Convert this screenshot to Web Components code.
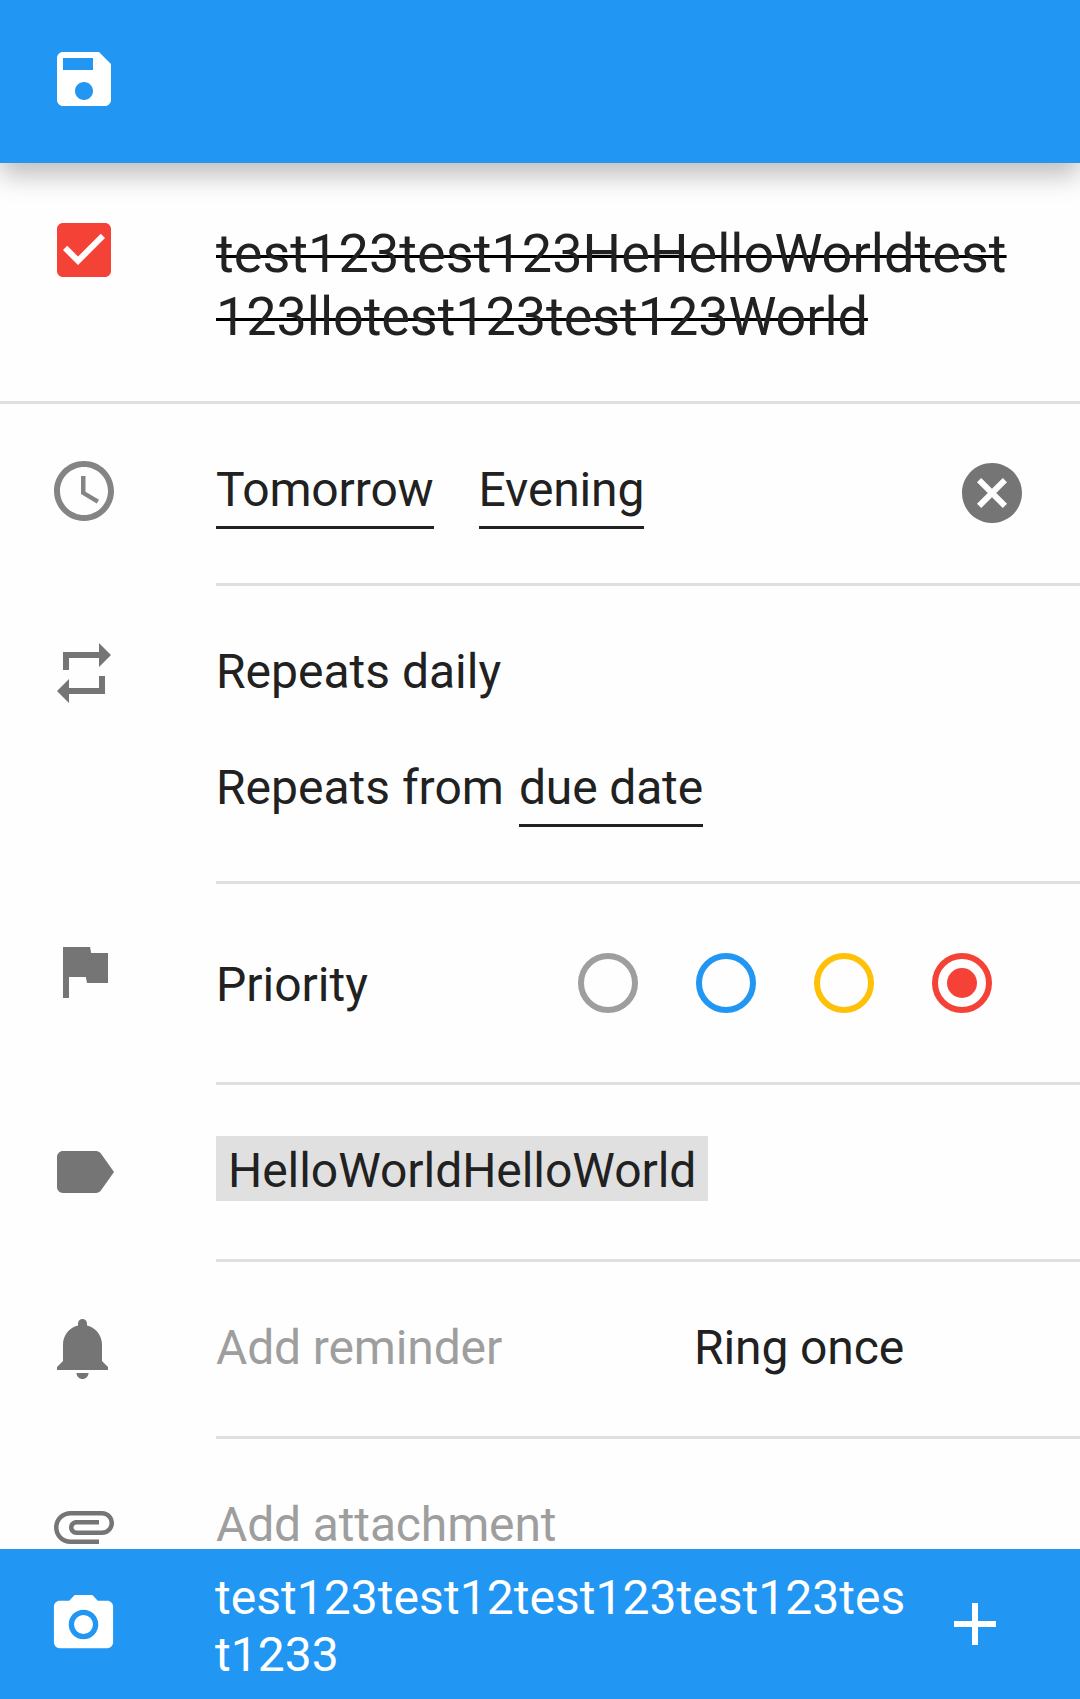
<!DOCTYPE html>
<html lang="en">
<head>
<meta charset="utf-8">
<title>Edit task</title>
<style>
  html, body { margin: 0; height: 100%; overflow: hidden; }
  body { background: #fefefe; }
</style>
</head>
<body>
<task-editor></task-editor>
<script>
const define = (name, html, setup) => {
  const tpl = document.createElement('template');
  tpl.innerHTML = html;
  customElements.define(name, class extends HTMLElement {
    constructor() {
      super();
      this.attachShadow({ mode: 'open' }).append(tpl.content.cloneNode(true));
    }
    connectedCallback() { if (setup) setup(this, this.shadowRoot); }
  });
};

const ICONS = {
  save: 'M17 3H5c-1.11 0-2 .9-2 2v14c0 1.1.89 2 2 2h14c1.1 0 2-.9 2-2V7l-4-4zm-5 16c-1.66 0-3-1.34-3-3s1.34-3 3-3 3 1.34 3 3-1.34 3-3 3zm3-10H5V5h10v4z',
  checkbox: 'M19 3H5c-1.11 0-2 .9-2 2v14c0 1.1.89 2 2 2h14c1.11 0 2-.9 2-2V5c0-1.1-.89-2-2-2zm-9 14l-5-5 1.41-1.41L10 14.17l7.59-7.59L19 8l-9 9z',
  clock: 'M11.99 2C6.47 2 2 6.48 2 12s4.47 10 9.99 10C17.52 22 22 17.52 22 12S17.52 2 11.99 2zM12 20c-4.42 0-8-3.58-8-8s3.58-8 8-8 8 3.58 8 8-3.58 8-8 8zm.5-13H11v6l5.25 3.15.75-1.23-4.5-2.67z',
  cancel: 'M12 2C6.47 2 2 6.47 2 12s4.47 10 10 10 10-4.47 10-10S17.53 2 12 2zm5 13.59L15.59 17 12 13.41 8.41 17 7 15.59 10.59 12 7 8.41 8.41 7 12 10.59 15.59 7 17 8.41 13.41 12 17 15.59z',
  repeat: 'M7 7h10v3l4-4-4-4v3H5v6h2V7zm10 10H7v-3l-4 4 4 4v-3h12v-6h-2v4z',
  flag: 'M14.4 6L14 4H5v17h2v-7h5.6l.4 2h7V6z',
  label: 'M17.63 5.84C17.27 5.33 16.67 5 16 5L5 5.01C3.9 5.01 3 5.9 3 7v10c0 1.1.9 1.99 2 1.99L16 19c.67 0 1.27-.33 1.63-.84L22 12l-4.37-6.16z',
  bell: 'M11.5 22c1.1 0 2-.9 2-2h-4c0 1.1.9 2 2 2zm6.5-6v-5.5c0-3.07-2.13-5.64-5-6.32V3.5c0-.83-.67-1.5-1.5-1.5S10 2.67 10 3.5v.68c-2.87.68-5 3.25-5 6.32V16l-2 2v1h17v-1l-2-2z',
  attachment: 'M7.5 18C4.46 18 2 15.54 2 12.5S4.46 7 7.5 7H18c2.21 0 4 1.79 4 4s-1.79 4-4 4H9.5C8.12 15 7 13.88 7 12.5S8.12 10 9.5 10H17v1.5H9.5c-.55 0-1 .45-1 1s.45 1 1 1H18c1.38 0 2.5-1.12 2.5-2.5S19.38 8.5 18 8.5H7.5c-2.21 0-4 1.79-4 4s1.79 4 4 4H17V18H7.5z',
  camera: 'M12 8.8a3.2 3.2 0 1 0 0 6.4 3.2 3.2 0 0 0 0-6.4zM9 2L7.17 4H4c-1.1 0-2 .9-2 2v12c0 1.1.9 2 2 2h16c1.1 0 2-.9 2-2V6c0-1.1-.9-2-2-2h-3.17L15 2H9zm3 15c-2.76 0-5-2.24-5-5s2.24-5 5-5 5 2.24 5 5-2.24 5-5 5z',
  add: 'M19 13h-6v6h-2v-6H5v-2h6V5h2v6h6v2z'
};

define('md-icon', `
  <style>
    :host { display: block; flex: none; width: var(--size, 72px); height: var(--size, 72px); color: #757575; }
    svg { display: block; width: 100%; height: 100%; fill: currentColor; }
  </style>
  <svg viewBox="0 0 24 24"><path/></svg>`,
  (el, root) => root.querySelector('path').setAttribute('d', ICONS[el.getAttribute('name')]));

define('app-bar', `
  <style>
    :host { display: flex; box-sizing: border-box; height: 163px; flex: none; padding: 43px 48px 0;
            background: #2196f3; z-index: 1; box-shadow: 0 12px 25px rgba(0,0,0,.26); }
    ::slotted(md-icon) { color: #fff; }
  </style>
  <slot></slot>`);

define('task-row', `
  <style>
    :host { display: flex; box-sizing: border-box; flex: none; height: var(--h); padding-left: 48px; }
    .icon { flex: none; width: 168px; padding-top: var(--icon-top); }
    .body { flex: 1; min-width: 0; box-sizing: border-box; display: flex; align-items: flex-start;
            padding-top: var(--top); border-bottom: 3px solid #e0e0e0; }
    :host([stacked]) .body { flex-direction: column; }
    :host([full]) { border-bottom: 3px solid #e0e0e0; }
    :host([full]) .body, :host([last]) .body { border-bottom: 0; }
  </style>
  <div class="icon"><slot name="icon"></slot></div>
  <div class="body"><slot></slot></div>`);

define('link-text', `
  <style>:host { display: inline-block; padding-bottom: 8px; border-bottom: 3px solid #212121; letter-spacing: -.14px; }</style>
  <slot></slot>`);

define('tag-chip', `
  <style>:host { display: block; box-sizing: border-box; height: 65px; padding: 6px 12px 0; background: #e0e0e0; letter-spacing: -.05px; }</style>
  <slot></slot>`);

define('priority-dot', `
  <style>
    :host { display: flex; box-sizing: border-box; width: 60px; height: 60px; border: 6px solid currentColor; border-radius: 50%; }
    i { display: none; width: 30px; height: 30px; margin: auto; border-radius: 50%; background: currentColor; }
    :host([checked]) i { display: block; }
  </style>
  <i></i>`);

define('comment-bar', `
  <style>
    :host { display: flex; flex: none; box-sizing: border-box; height: 150px; padding: 0 69px 0 48px;
            align-items: center; background: #2196f3; color: #fff; z-index: 1; }
    md-icon { color: #fff; }
    .photo { --size: 71px; }
    .text { flex: none; width: 700px; margin: 0 24px 0 96px; padding-top: 4px; word-break: break-all; letter-spacing: .04px; }
  </style>
  <md-icon class="photo" name="camera"></md-icon>
  <div class="text"><slot></slot></div>
  <md-icon name="add"></md-icon>`);

define('task-editor', `
  <style>
    :host { display: flex; flex-direction: column; width: 1080px; height: 1699px; background: #fefefe;
            font: 48px/57px Roboto, sans-serif; color: #212121; }
    main { flex: 1; min-height: 0; display: flex; flex-direction: column; }
    .title { width: 800px; font-size: 54px; line-height: 63px; }
    .title span { display: block; width: max-content; text-decoration: underline #000 3px;
                  text-underline-offset: -17px; text-decoration-skip-ink: none; }
    .l1 { letter-spacing: .06px; }
    .l2 { letter-spacing: -.07px; }
    .done { color: #f44336; }
    .clock { color: #848484; }
    .hint { color: #9e9e9e; letter-spacing: -.14px; }
    .attach { line-height: 49px; }
    .gap { margin-left: 45px; }
    .cancel { margin: -4px 52px 0 auto; }
    .from { margin-top: 59px; display: flex; align-items: flex-start; gap: 15px; }
    .dots { display: flex; gap: 58px; margin: -3px 88px 0 auto; }
    .ring { margin: 0 0 0 192px; letter-spacing: -.12px; }
  </style>
  <app-bar><md-icon name="save"></md-icon></app-bar>
  <main>
    <task-row full style="--h:241px; --icon-top:51px; --top:59px">
      <md-icon slot="icon" class="done" name="checkbox"></md-icon>
      <div class="title"><span class="l1">test123test123HeHelloWorldtest</span><span class="l2">123llotest123test123World</span></div>
    </task-row>
    <task-row style="--h:182px; --icon-top:51px; --top:57px">
      <md-icon slot="icon" class="clock" name="clock"></md-icon>
      <link-text>Tomorrow</link-text><link-text class="gap">Evening</link-text>
      <md-icon class="cancel" name="cancel"></md-icon>
    </task-row>
    <task-row stacked style="--h:298px; --icon-top:51px; --top:57px">
      <md-icon slot="icon" name="repeat"></md-icon>
      <div>Repeats daily</div>
      <div class="from"><span>Repeats from</span><link-text>due date</link-text></div>
    </task-row>
    <task-row style="--h:201px; --icon-top:51px; --top:72px">
      <md-icon slot="icon" name="flag"></md-icon>
      <div>Priority</div>
      <div class="dots">
        <priority-dot style="color:#9e9e9e"></priority-dot>
        <priority-dot style="color:#2196f3"></priority-dot>
        <priority-dot style="color:#ffc107"></priority-dot>
        <priority-dot checked style="color:#f44336"></priority-dot>
      </div>
    </task-row>
    <task-row style="--h:177px; --icon-top:51px; --top:51px">
      <md-icon slot="icon" name="label"></md-icon>
      <tag-chip>HelloWorldHelloWorld</tag-chip>
    </task-row>
    <task-row style="--h:177px; --icon-top:51px; --top:57px">
      <md-icon slot="icon" name="bell"></md-icon>
      <div class="hint">Add reminder</div>
      <div class="ring">Ring once</div>
    </task-row>
    <task-row last style="--h:110px; --icon-top:51px; --top:61px">
      <md-icon slot="icon" name="attachment"></md-icon>
      <div class="hint attach">Add attachment</div>
    </task-row>
  </main>
  <comment-bar>test123test12test123test123tes<br>t1233</comment-bar>`);
</script>
</body>
</html>
